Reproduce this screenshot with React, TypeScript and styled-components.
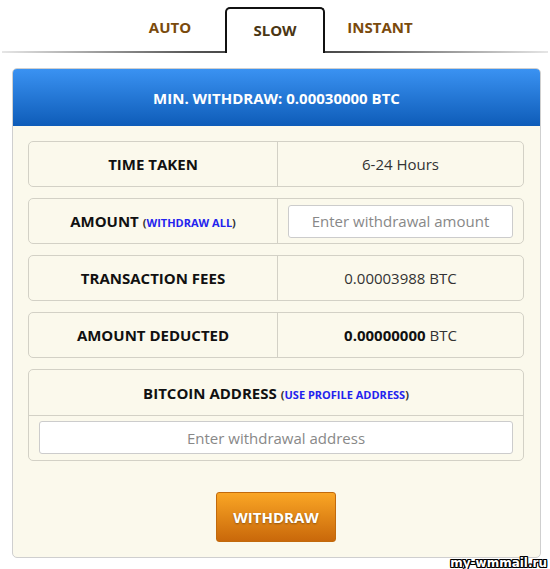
import styled, { createGlobalStyle } from 'styled-components';

const GlobalStyle = createGlobalStyle`
  html, body {
    margin: 0;
    padding: 0;
    background: #ffffff;
  }
  body {
    font-family: 'Open Sans', 'Liberation Sans', sans-serif;
    color: #222;
  }
  * {
    box-sizing: border-box;
  }
`;

const TABS = ['AUTO', 'SLOW', 'INSTANT'];

interface InfoRow {
  label: string;
  value: React.ReactNode;
}

const ROWS: InfoRow[] = [
  { label: 'TIME TAKEN', value: '6-24 Hours' },
  {
    label: 'TRANSACTION FEES',
    value: '0.00003988 BTC',
  },
  {
    label: 'AMOUNT DEDUCTED',
    value: (
      <span>
        <b>0.00000000</b> BTC
      </span>
    ),
  },
];

export default function App() {
  return (
    <Page>
      <GlobalStyle />
      <TabBar>
        {TABS.map(tab => (
          <Tab key={tab} $active={tab === 'SLOW'}>
            {tab}
          </Tab>
        ))}
      </TabBar>

      <Panel>
        <PanelHeader>MIN. WITHDRAW: 0.00030000 BTC</PanelHeader>
        <PanelBody>
          <Row>
            <Label>{ROWS[0].label}</Label>
            <Value>{ROWS[0].value}</Value>
          </Row>
          <Row>
            <Label>
              AMOUNT <Hint>(<a>WITHDRAW ALL</a>)</Hint>
            </Label>
            <Value>
              <Input placeholder="Enter withdrawal amount" />
            </Value>
          </Row>
          <Row>
            <Label>{ROWS[1].label}</Label>
            <Value>{ROWS[1].value}</Value>
          </Row>
          <Row>
            <Label>{ROWS[2].label}</Label>
            <Value>{ROWS[2].value}</Value>
          </Row>
          <AddressBox>
            <AddressLabel>
              BITCOIN ADDRESS <Hint>(<a>USE PROFILE ADDRESS</a>)</Hint>
            </AddressLabel>
            <AddressField>
              <Input placeholder="Enter withdrawal address" />
            </AddressField>
          </AddressBox>
          <ButtonWrap>
            <WithdrawButton>WITHDRAW</WithdrawButton>
          </ButtonWrap>
        </PanelBody>
      </Panel>

      <Watermark>my-wmmail.ru</Watermark>
    </Page>
  );
}

const Page = styled.div`
  position: relative;
  width: 550px;
  height: 569px;
  overflow: hidden;
`;

const TabBar = styled.div`
  position: relative;
  display: flex;
  justify-content: center;
  gap: 5px;
  height: 53px;
  padding-top: 7px;
  margin: 0 2px;

  &::after {
    content: '';
    position: absolute;
    left: 0;
    right: 0;
    bottom: 0;
    height: 2px;
    background: linear-gradient(to right, #e6e6e6, #555 35%, #333 50%, #555 65%, #e6e6e6);
  }
`;

const Tab = styled.div<{ $active?: boolean }>`
  position: relative;
  z-index: 1;
  width: 100px;
  height: 46px;
  display: flex;
  justify-content: center;
  padding-top: ${p => (p.$active ? '11px' : '8px')};
  font-size: 15px;
  font-weight: 700;
  color: ${p => (p.$active ? '#4a3614' : '#7a4a0c')};
  background: ${p => (p.$active ? '#ffffff' : 'transparent')};
  border: 2px solid ${p => (p.$active ? '#111' : 'transparent')};
  border-bottom: none;
  border-radius: 5px 5px 0 0;
`;

const Panel = styled.div`
  margin: 15px 9px 0 12px;
  border: 1px solid #cfcfcf;
  border-radius: 5px;
  background: #fbf9ec;
  overflow: hidden;
`;

const PanelHeader = styled.div`
  height: 57px;
  display: flex;
  align-items: center;
  justify-content: center;
  background: linear-gradient(to bottom, #3a92f2, #0e5cb8);
  color: #fff;
  font-size: 15px;
  font-weight: 700;
`;

const PanelBody = styled.div`
  display: flex;
  flex-direction: column;
  gap: 11px;
  padding: 15px 16px 15px 15px;
`;

const Row = styled.div`
  display: grid;
  grid-template-columns: 249px 1fr;
  height: 46px;
  border: 1px solid #d3d1c6;
  border-radius: 5px;
`;

const Label = styled.div`
  display: flex;
  align-items: center;
  justify-content: center;
  gap: 4px;
  border-right: 1px solid #d3d1c6;
  font-size: 15px;
  font-weight: 700;
  color: #111;
`;

const Value = styled.div`
  display: flex;
  align-items: center;
  justify-content: center;
  padding: 0 10px;
  font-size: 15px;
  color: #333;

  b {
    color: #111;
  }
`;

const Hint = styled.span`
  font-size: 11px;
  font-weight: 700;
  color: #333;
  align-self: center;
  padding-top: 3px;

  a {
    color: #2323ee;
  }
`;

const Input = styled.input`
  width: 100%;
  height: 33px;
  border: 1px solid #cccccc;
  border-radius: 3px;
  background: #fff;
  font-family: 'Open Sans', 'Liberation Sans', sans-serif;
  font-size: 15px;
  text-align: center;
  color: #333;
  outline: none;

  &::placeholder {
    color: #888;
  }
`;

const AddressBox = styled.div`
  border: 1px solid #d3d1c6;
  border-radius: 5px;
`;

const AddressLabel = styled.div`
  height: 46px;
  display: flex;
  align-items: center;
  justify-content: center;
  gap: 4px;
  border-bottom: 1px solid #d3d1c6;
  font-size: 15px;
  font-weight: 700;
  color: #111;
`;

const AddressField = styled.div`
  padding: 5px 10px 6px 10px;
`;

const ButtonWrap = styled.div`
  display: flex;
  justify-content: center;
  padding-top: 20px;
`;

const WithdrawButton = styled.button`
  width: 120px;
  height: 50px;
  border: 1px solid #c26a0c;
  border-radius: 3px;
  background: linear-gradient(to bottom, #faa625, #c9680a);
  color: #fff;
  font-family: 'Open Sans', 'Liberation Sans', sans-serif;
  font-size: 15px;
  font-weight: 700;
  text-shadow: 0 1px 2px rgba(0, 0, 0, 0.35);
  cursor: pointer;
`;

const Watermark = styled.div`
  position: absolute;
  right: 3px;
  bottom: -1px;
  font-family: 'DejaVu Sans', sans-serif;
  font-size: 12px;
  font-weight: 700;
  color: #fff;
  text-shadow: 1px 0 #000, -1px 0 #000, 0 1px #000, 0 -1px #000, 1px 1px #000, -1px -1px #000,
    1px -1px #000, -1px 1px #000;
`;
